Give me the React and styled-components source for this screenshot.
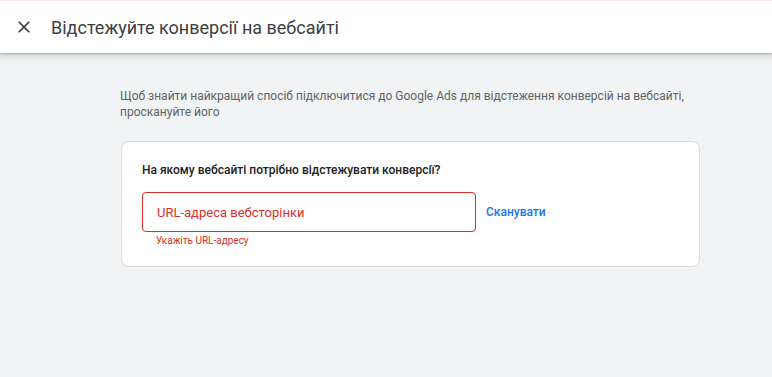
import React from "react";
import styled, { createGlobalStyle } from "styled-components";

const Global = createGlobalStyle`
  html, body { margin: 0; padding: 0; height: 100%; }
  body { background: #f1f3f4; font-family: Roboto, "Noto Sans", Arial, sans-serif; }
  #root { min-height: 100%; }
`;

const Page = styled.div`
  min-height: 377px;
  background: #f1f3f4;
  display: flex;
  flex-direction: column;
`;

const Header = styled.header`
  height: 53px;
  background: #fff;
  border-top: 1px solid #fce8e6;
  box-sizing: border-box;
  box-shadow: 0 1px 2px rgba(60,64,67,0.3), 0 2px 6px 2px rgba(60,64,67,0.15);
  display: flex;
  align-items: center;
  padding-left: 14px;
  gap: 17px;
  position: relative;
  z-index: 1;
`;

const CloseButton = styled.button`
  width: 20px;
  height: 20px;
  padding: 0;
  border: 0;
  background: none;
  display: flex;
  align-items: center;
  justify-content: center;
  color: #3c4043;
  cursor: pointer;
`;

const Title = styled.h1`
  margin: 0;
  font-size: 18px;
  font-weight: 400;
  color: #3c4043;
`;

const Content = styled.main`
  padding: 35px 0 0 120px;
  width: 580px;
`;

const Intro = styled.p`
  margin: 0 0 21px;
  font-size: 12px;
  line-height: 16px;
  color: #5f6368;
`;

const Card = styled.section`
  background: #fff;
  border: 1px solid #dadce0;
  border-radius: 8px;
  padding: 20px 21px 18px 20px;
  margin-left: 1px;
`;

const Question = styled.div`
  font-size: 12px;
  font-weight: 500;
  color: #202124;
  line-height: 16px;
  margin-bottom: 14px;
`;

const Row = styled.div`
  display: flex;
  align-items: flex-start;
  gap: 10px;
`;

const Field = styled.div`
  display: flex;
  flex-direction: column;
`;

const Input = styled.input`
  width: 334px;
  height: 40px;
  box-sizing: border-box;
  border: 1px solid #d93025;
  border-radius: 4px;
  padding: 0 14px;
  font-family: inherit;
  font-size: 13px;
  color: #202124;
  outline: none;
  &::placeholder { color: #d93025; }
`;

const Error = styled.div`
  font-size: 10px;
  color: #d93025;
  line-height: 14px;
  margin: 2px 0 0 14px;
`;

const ScanLink = styled.button`
  border: 0;
  background: none;
  padding: 0;
  font-family: inherit;
  font-size: 12px;
  font-weight: 500;
  color: #1a73e8;
  height: 40px;
  cursor: pointer;
`;

export default function App() {
  return (
    <>
      <Global />
      <Page>
        <Header>
          <CloseButton aria-label="Закрити">
            <svg width="20" height="20" viewBox="0 0 24 24" fill="currentColor">
              <path d="M19 6.41 17.59 5 12 10.59 6.41 5 5 6.41 10.59 12 5 17.59 6.41 19 12 13.41 17.59 19 19 17.59 13.41 12z" />
            </svg>
          </CloseButton>
          <Title>Відстежуйте конверсії на вебсайті</Title>
        </Header>
        <Content>
          <Intro>
            Щоб знайти найкращий спосіб підключитися до Google Ads для відстеження конверсій на вебсайті, проскануйте його
          </Intro>
          <Card>
            <Question>На якому вебсайті потрібно відстежувати конверсії?</Question>
            <Row>
              <Field>
                <Input placeholder="URL-адреса вебсторінки" />
                <Error>Укажіть URL-адресу</Error>
              </Field>
              <ScanLink>Сканувати</ScanLink>
            </Row>
          </Card>
        </Content>
      </Page>
    </>
  );
}
